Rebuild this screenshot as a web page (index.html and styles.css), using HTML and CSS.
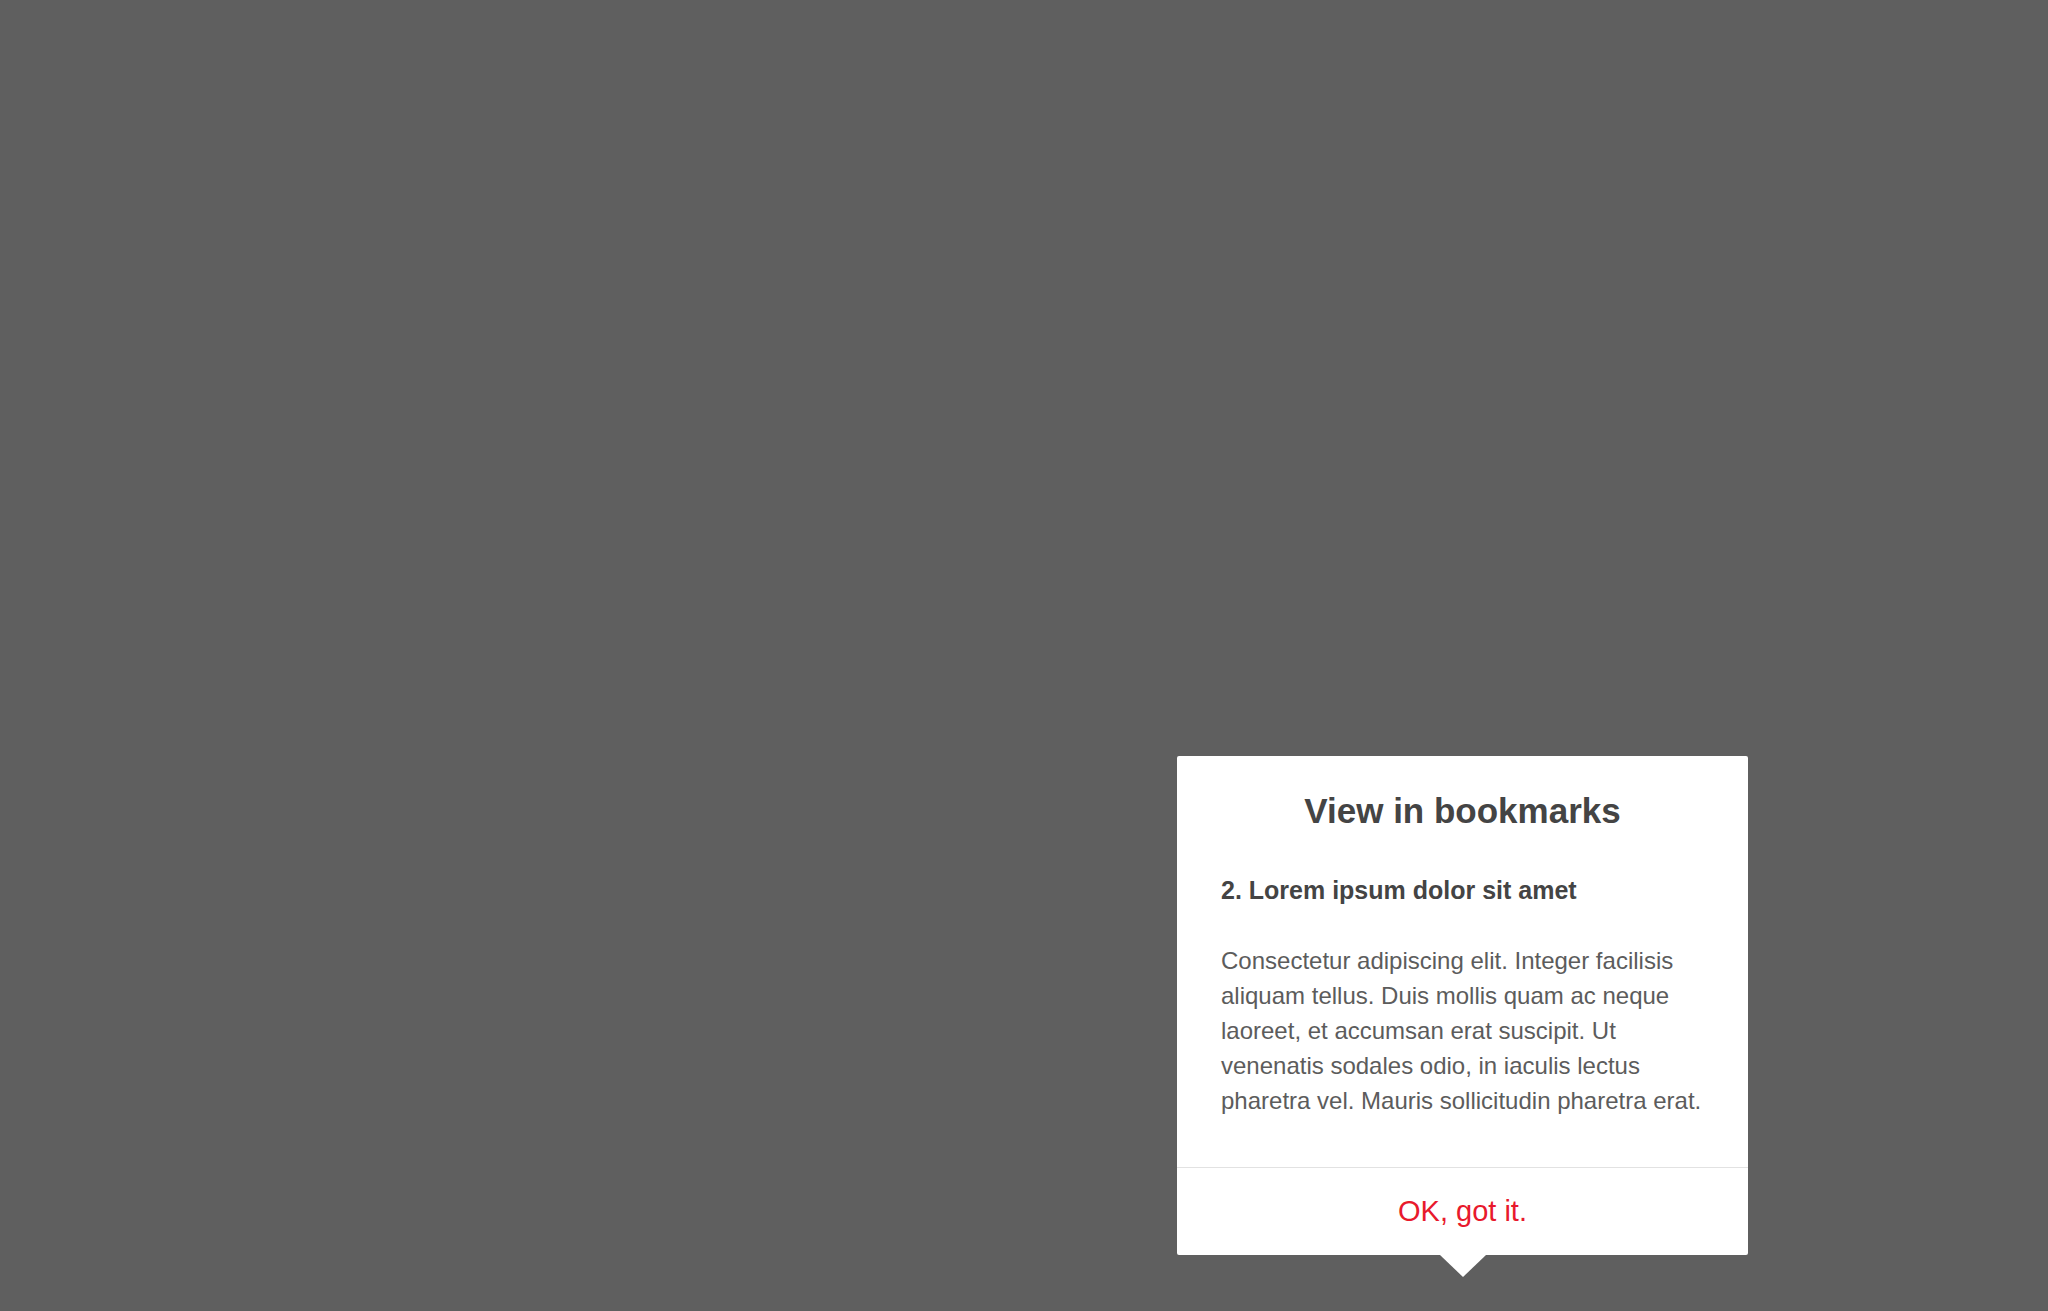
FILE: index.html
```html
<!DOCTYPE html>
<html lang="en">
<head>
<meta charset="utf-8">
<title>View in bookmarks</title>
<link rel="stylesheet" href="styles.css">
</head>
<body>
<div class="stage">
  <div class="tip" role="dialog" aria-labelledby="tip-title">
    <div class="tip-body">
      <h1 class="tip-title" id="tip-title">View in bookmarks</h1>
      <h2 class="tip-sub">2. Lorem ipsum dolor sit amet</h2>
      <p class="tip-text">Consectetur adipiscing elit. Integer facilisis aliquam tellus. Duis mollis quam ac neque laoreet, et accumsan erat suscipit. Ut venenatis sodales odio, in iaculis lectus pharetra vel. Mauris sollicitudin pharetra erat.</p>
    </div>
    <div class="tip-foot">
      <button class="tip-ok" type="button">OK, got it.</button>
    </div>
  </div>
</div>
</body>
</html>
```

FILE: styles.css
```css
html, body {
  margin: 0;
  padding: 0;
  height: 100%;
}
body {
  background: #5f5f5f;
  font-family: "Liberation Sans", Arial, sans-serif;
  overflow: hidden;
}
.stage {
  position: relative;
  width: 2048px;
  height: 1311px;
}
.tip {
  position: absolute;
  left: 1177px;
  top: 756px;
  width: 571px;
  background: #ffffff;
  border-radius: 2px;
}
.tip::after {
  content: "";
  position: absolute;
  left: 263px;
  top: 100%;
  width: 0;
  height: 0;
  border-left: 23px solid transparent;
  border-right: 23px solid transparent;
  border-top: 22px solid #ffffff;
}
.tip-body {
  padding: 35px 40px 49px 44px;
}
.tip-title {
  margin: 0 4px 0 0;
  font-size: 35px;
  line-height: 40px;
  font-weight: bold;
  color: #444444;
  text-align: center;
}
.tip-sub {
  margin: 45px 0 0;
  font-size: 25px;
  line-height: 28px;
  font-weight: bold;
  color: #444444;
}
.tip-text {
  margin: 39px 0 0;
  font-size: 24px;
  line-height: 35px;
  font-weight: normal;
  color: #5c5c5c;
}
.tip-foot {
  border-top: 1px solid #e2e2e2;
  height: 87px;
  display: flex;
  align-items: center;
  justify-content: center;
}
.tip-ok {
  border: 0;
  background: none;
  padding: 0;
  font-family: "Liberation Sans", Arial, sans-serif;
  font-size: 29px;
  line-height: 87px;
  color: #e8192c;
  cursor: pointer;
}
```
